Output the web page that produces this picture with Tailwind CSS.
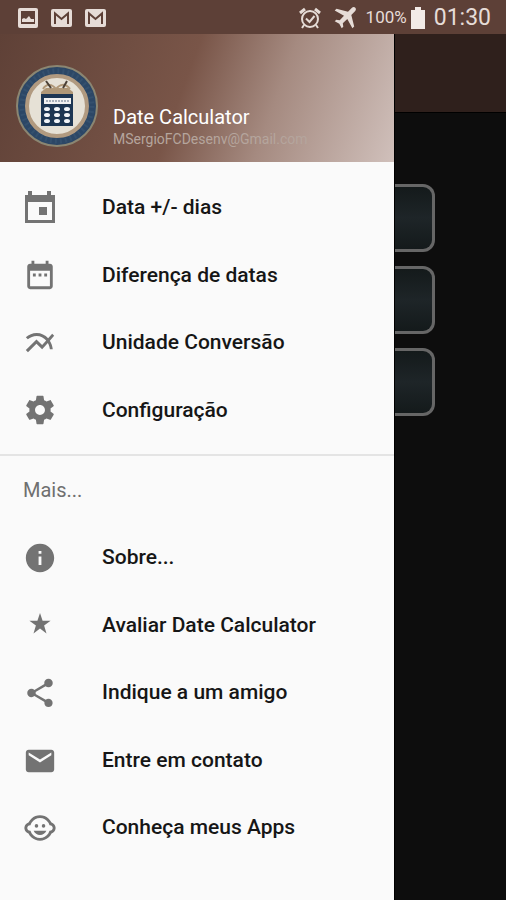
<!DOCTYPE html>
<html lang="pt-BR">
<head>
  <meta charset="UTF-8">
  <meta name="viewport" content="width=device-width, initial-scale=1.0">
  <title>Date Calculator</title>
  <script src="https://cdn.jsdelivr.net/npm/@tailwindcss/browser@4"></script>
</head>
<body class="min-h-screen flex flex-col bg-[#0d0d0d] font-[Roboto,sans-serif]">

  <!-- Status bar -->
  <div class="h-[34px] shrink-0 flex items-center justify-between pt-[2px] pl-[18px] pr-[15px] bg-[#5d4037] text-[#e6dcd7]">
    <div class="flex items-center gap-[13px]">
      <svg class="w-5 h-5" viewBox="0 0 20 20">
        <rect width="20" height="20" rx="2" fill="#e6dcd7"/>
        <rect x="3" y="3" width="14" height="13" fill="#5d4037"/>
        <path d="M4 14v-3l2-1 2 1 3-3 2 3h3v3z" fill="#e6dcd7"/>
      </svg>
      <svg class="w-[21px] h-[18px]" viewBox="0 0 21 18">
        <rect width="21" height="18" rx="2" fill="#e6dcd7"/>
        <path d="M4 15V4.500l6.500 5.500L17 4.500V15" fill="none" stroke="#5d4037" stroke-width="2"/>
      </svg>
      <svg class="w-[21px] h-[18px]" viewBox="0 0 21 18">
        <rect width="21" height="18" rx="2" fill="#e6dcd7"/>
        <path d="M4 15V4.500l6.500 5.500L17 4.500V15" fill="none" stroke="#5d4037" stroke-width="2"/>
      </svg>
    </div>
    <div class="flex items-center">
      <svg class="w-[22px] h-[22px] mr-[13px]" viewBox="0 0 22 22" fill="none" stroke="#e6dcd7" stroke-width="2">
        <circle cx="11" cy="12" r="8"/>
        <path d="M7 11.500l3.500 3.500L15.500 9M5 18l-2 3M17 18l2 3"/>
        <path d="M1 6L6 2M21 6L16 2" stroke-width="3"/>
      </svg>
      <svg class="w-[22px] h-[22px] mr-[10px]" viewBox="0 0 22 22" fill="#e6dcd7">
        <path d="M21.300.7c-1-1-2.600-.7-3.600.3L14 4.700 2.500 1.800.7 3.600l9.300 5.100-4.300 4.500-3.400-.5L.7 14.300l4.600 2.400 2.400 4.600 1.600-1.600-.5-3.400 4.500-4.300 5.100 9.300 1.800-1.800L17.300 8 21 4.300c1-1 1.300-2.600.3-3.600z"/>
      </svg>
      <span class="text-[17px]">100%</span>
      <svg class="w-[14px] h-[22px] ml-1 mr-[9px]" viewBox="0 0 14 22" fill="#f3ebe7">
        <path d="M0 3h4V0h6v3h4v19H0z"/>
      </svg>
      <span class="text-[23px]">01:30</span>
    </div>
  </div>

  <div class="flex-1 flex">

    <!-- Drawer -->
    <aside class="flex-1 bg-[#fafafa]">
      <header class="h-32 flex items-center gap-[15px] pl-4 pt-4 bg-[linear-gradient(110deg,#5f4137_0%,#795548_46%,#a58a80_68%,#d0c0bb_100%)]">
        <svg class="w-[82px] h-[82px] shrink-0" viewBox="0 0 82 82">
          <circle cx="41" cy="41" r="40" fill="#2c4766" stroke="#8b8672" stroke-width="2"/>
          <circle cx="41" cy="41" r="35" fill="none" stroke="#34506e" stroke-width="5" stroke-dasharray="2 3"/>
          <circle cx="41" cy="41" r="30" fill="#e6e1d6" stroke="#b19a80" stroke-width="4"/>
          <path d="M25 30v-3l5-4h22l5 4v3z" fill="#b09878"/>
          <path d="M27 24c4-6 9-5 13 0 4-5 9-6 14 0" fill="none" stroke="#b09878" stroke-width="2"/>
          <path d="M30 16l5 7M51 16l-4 7" stroke="#4b4036" stroke-width="2"/>
          <rect x="25" y="29" width="32" height="32" fill="#1d3653"/>
          <rect x="28" y="33" width="27" height="6" fill="#f2f2f2"/>
          <path d="M30 36h23" stroke="#a9b1bc" stroke-width="2" stroke-dasharray="2 1"/>
          <g fill="#f1f4f8">
            <ellipse cx="31" cy="44" rx="3" ry="2"/><ellipse cx="41" cy="44" rx="3" ry="2"/><ellipse cx="51" cy="44" rx="3" ry="2"/>
            <ellipse cx="31" cy="50" rx="3" ry="2"/><ellipse cx="41" cy="50" rx="3" ry="2"/><ellipse cx="51" cy="50" rx="3" ry="2"/>
            <ellipse cx="31" cy="56" rx="3" ry="2"/><ellipse cx="41" cy="56" rx="3" ry="2"/><ellipse cx="51" cy="56" rx="3" ry="2"/>
          </g>
        </svg>
        <div class="self-end pb-[13px]">
          <h1 class="text-[20px] leading-6 text-white">Date Calculator</h1>
          <p class="text-[14px] leading-5 text-[#b5a59d]">MSergioFCDesenv@Gmail.com</p>
        </div>
      </header>

      <nav>
        <ul class="h-[294px] pt-3 pb-[10px] grid grid-rows-4 text-[21px] font-medium text-[#161616] border-b-2 border-[#e4e4e4]">
          <li>
            <a href="#" class="h-full flex items-center gap-[45px] pl-[23px]">
              <svg class="w-[34px] h-[34px]" viewBox="0 0 34 34" fill="#737373">
                <path d="M2 4h3V0h4v4h15V0h4v4h4v28H2zM5 11v18h24V11zM16 16h8v8h-8z" fill-rule="evenodd"/>
              </svg>
              Data +/- dias
            </a>
          </li>
          <li>
            <a href="#" class="h-full flex items-center gap-[45px] pl-[23px]">
              <svg class="w-[34px] h-[34px]" viewBox="0 0 24 24" fill="#737373">
                <path d="M9 11H7v2h2v-2zm4 0h-2v2h2v-2zm4 0h-2v2h2v-2zm2-7h-1V2h-2v2H8V2H6v2H5c-1.110 0-2 .9-2 2v14c0 1.100.89 2 2 2h14c1.100 0 2-.9 2-2V6c0-1.100-.9-2-2-2zm0 16H5V9h14v11z"/>
              </svg>
              Diferença de datas
            </a>
          </li>
          <li>
            <a href="#" class="h-full flex items-center gap-[45px] pl-[23px]">
              <svg class="w-[34px] h-[34px]" viewBox="0 0 24 24" fill="#737373">
                <path d="M22 6.920l-1.410-1.410-2.850 3.210C15.680 6.400 12.830 5 9.610 5 6.720 5 4.070 6.160 2 8l1.420 1.420C5.120 7.930 7.270 7 9.610 7c2.740 0 5.090 1.260 6.770 3.240l-2.880 3.240-4-4L2 16.990l1.500 1.500 6-6.010 4 4 4.050-4.550c.75 1.350 1.250 2.900 1.440 4.550H21c-.22-2.300-.95-4.390-2.040-6.140L22 6.920z"/>
              </svg>
              Unidade Conversão
            </a>
          </li>
          <li>
            <a href="#" class="h-full flex items-center gap-[45px] pl-[23px]">
              <svg class="w-[34px] h-[34px]" viewBox="0 0 24 24" fill="#737373">
                <path d="M19.430 12.980c.04-.32.07-.64.07-.98s-.03-.66-.07-.98l2.110-1.650c.19-.15.24-.42.12-.64l-2-3.460c-.12-.22-.39-.3-.61-.22l-2.490 1c-.52-.4-1.080-.73-1.690-.98l-.38-2.650C14.460 2.180 14.250 2 14 2h-4c-.25 0-.46.18-.49.42l-.38 2.650c-.61.25-1.170.59-1.690.98l-2.490-1c-.23-.09-.49 0-.61.22l-2 3.460c-.13.22-.07.49.12.64l2.110 1.650c-.04.32-.07.65-.07.98s.03.66.07.98l-2.110 1.650c-.19.15-.24.42-.12.64l2 3.460c.12.22.39.3.61.22l2.490-1c.52.4 1.080.73 1.690.98l.38 2.650c.03.24.24.42.49.42h4c.25 0 .46-.18.49-.42l.38-2.650c.61-.25 1.170-.59 1.690-.98l2.490 1c.23.09.49 0 .61-.22l2-3.460c.12-.22.07-.49-.12-.64l-2.110-1.650zM12 15.500c-1.930 0-3.500-1.570-3.500-3.500s1.570-3.500 3.500-3.500 3.500 1.570 3.500 3.500-1.570 3.500-3.500 3.500z"/>
              </svg>
              Configuração
            </a>
          </li>
        </ul>

        <h2 class="h-[68px] flex items-center pl-[23px] text-[20px] text-[#6f6f6f]">Mais...</h2>
        <ul class="h-[338px] grid grid-rows-5 text-[21px] font-medium text-[#161616]">
          <li>
            <a href="#" class="h-full flex items-center gap-[45px] pl-[23px]">
              <svg class="w-[34px] h-[34px]" viewBox="0 0 24 24" fill="#737373">
                <path d="M12 2C6.480 2 2 6.480 2 12s4.480 10 10 10 10-4.480 10-10S17.520 2 12 2zm1 15h-2v-6h2v6zm0-8h-2V7h2v2z"/>
              </svg>
              Sobre...
            </a>
          </li>
          <li>
            <a href="#" class="h-full flex items-center gap-[45px] pl-[23px]">
              <svg class="w-[34px] h-[34px]" viewBox="0 0 34 34" fill="#737373">
                <path d="M17 5l2.600 7.700h8l-6.500 4.900 2.400 7.900-6.500-4.900-6.500 4.900 2.400-7.900-6.500-4.900h8z"/>
              </svg>
              Avaliar Date Calculator
            </a>
          </li>
          <li>
            <a href="#" class="h-full flex items-center gap-[45px] pl-[23px]">
              <svg class="w-[34px] h-[34px]" viewBox="0 0 24 24" fill="#737373">
                <path d="M18 16.080c-.76 0-1.440.3-1.960.77L8.910 12.700c.05-.23.09-.46.09-.7s-.04-.47-.09-.7l7.050-4.110c.54.5 1.250.81 2.040.81 1.660 0 3-1.340 3-3s-1.340-3-3-3-3 1.340-3 3c0 .24.04.47.09.7L8.040 9.810C7.500 9.310 6.790 9 6 9c-1.660 0-3 1.340-3 3s1.340 3 3 3c.79 0 1.500-.31 2.040-.81l7.120 4.160c-.05.21-.08.43-.08.65 0 1.610 1.310 2.920 2.920 2.920s2.920-1.310 2.920-2.920-1.310-2.920-2.920-2.920z"/>
              </svg>
              Indique a um amigo
            </a>
          </li>
          <li>
            <a href="#" class="h-full flex items-center gap-[45px] pl-[23px]">
              <svg class="w-[34px] h-[34px]" viewBox="0 0 24 24" fill="#737373">
                <path d="M20 4H4c-1.100 0-1.990.9-1.990 2L2 18c0 1.100.9 2 2 2h16c1.100 0 2-.9 2-2V6c0-1.100-.9-2-2-2zm0 4l-8 5-8-5V6l8 5 8-5v2z"/>
              </svg>
              Entre em contato
            </a>
          </li>
          <li>
            <a href="#" class="h-full flex items-center gap-[45px] pl-[23px]">
              <svg class="w-[34px] h-[34px]" viewBox="0 0 24 24" fill="#737373">
                <circle cx="14.500" cy="10.500" r="1.250"/>
                <circle cx="9.500" cy="10.500" r="1.250"/>
                <path d="M22.940 12.660c.04-.21.06-.43.06-.66s-.02-.45-.06-.66c-.25-1.510-1.360-2.740-2.810-3.170-.53-1.120-1.280-2.100-2.190-2.910C16.360 3.850 14.280 3 12 3s-4.360.85-5.940 2.260c-.92.81-1.670 1.800-2.190 2.910-1.450.43-2.560 1.650-2.810 3.170-.04.21-.06.43-.06.66s.02.45.06.66c.25 1.510 1.360 2.740 2.810 3.170.52 1.110 1.270 2.090 2.170 2.890C7.620 20.140 9.710 21 12 21s4.380-.86 5.970-2.280c.9-.8 1.650-1.790 2.170-2.890 1.440-.43 2.550-1.650 2.800-3.170zM19 14c-.1 0-.19-.02-.29-.03-.2.67-.49 1.290-.86 1.860C16.600 17.740 14.450 19 12 19s-4.600-1.260-5.850-3.170c-.37-.57-.66-1.190-.86-1.860-.1.010-.19.030-.29.030-1.100 0-2-.9-2-2s.9-2 2-2c.1 0 .19.020.29.030.2-.67.490-1.290.86-1.860C7.400 6.260 9.550 5 12 5s4.600 1.260 5.850 3.170c.37.57.66 1.190.86 1.860.1-.01.19-.03.29-.03 1.100 0 2 .9 2 2s-.9 2-2 2zM7.500 14c.76 1.770 2.490 3 4.500 3s3.740-1.230 4.500-3h-9z"/>
              </svg>
              Conheça meus Apps
            </a>
          </li>
        </ul>
      </nav>
    </aside>

    <!-- Dimmed screen behind the drawer -->
    <main class="w-28 border-l border-black">
      <div class="h-[79px] bg-[#2f201c] border-b border-black"></div>
      <div class="pt-[71px] flex flex-col gap-[14px]">
        <button type="button" aria-label="Data" class="w-10 h-[68px] rounded-r-xl border-[3px] border-l-0 border-[#666] bg-linear-to-b from-[#141a1b] via-[#1e2528] to-[#141a1b]"></button>
        <button type="button" aria-label="Diferença" class="w-10 h-[68px] rounded-r-xl border-[3px] border-l-0 border-[#666] bg-linear-to-b from-[#141a1b] via-[#1e2528] to-[#141a1b]"></button>
        <button type="button" aria-label="Unidade" class="w-10 h-[68px] rounded-r-xl border-[3px] border-l-0 border-[#666] bg-linear-to-b from-[#141a1b] via-[#1e2528] to-[#141a1b]"></button>
      </div>
    </main>
  </div>

</body>
</html>
